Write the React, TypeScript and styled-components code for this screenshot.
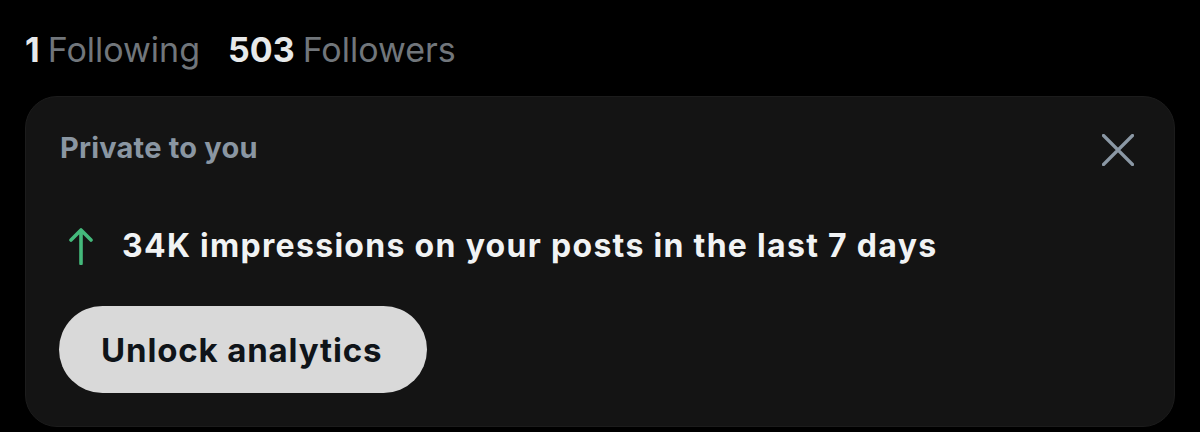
import React from "react";
import styled, { createGlobalStyle } from "styled-components";

const Global = createGlobalStyle`
  html, body { margin: 0; padding: 0; background: #000; }
  body { font-family: Inter, "Noto Sans", sans-serif; width: 1200px; height: 432px; overflow: hidden; }
`;

const Page = styled.div`
  display: flex;
  flex-direction: column;
  padding: 30px 25px 0 25px;
  gap: 26px;
`;

const Stats = styled.div`
  display: flex;
  align-items: baseline;
  gap: 28px;
  height: 40px;
  font-size: 34px;
  line-height: 40px;
  color: #71767b;
`;

const Stat = styled.span`
  display: inline-flex;
  align-items: baseline;
  gap: 8px;
`;

const Num = styled.b`
  color: #e7e9ea;
  font-weight: 700;
`;

const Card = styled.div`
  background: #141414;
  border: 1px solid #1c1c1c;
  border-radius: 32px;
  height: 331px;
  box-sizing: border-box;
  padding: 31px 40px 0 34px;
  display: flex;
  flex-direction: column;
`;

const Header = styled.div`
  display: flex;
  justify-content: space-between;
  align-items: center;
  height: 40px;
`;

const Label = styled.div`
  font-size: 29px;
  font-weight: 700;
  letter-spacing: 0.2px;
  color: #8a96a2;
  line-height: 40px;
`;

const Close = styled.button`
  background: none;
  border: 0;
  padding: 0;
  margin-top: 3px;
  width: 32px;
  height: 32px;
  display: flex;
  align-items: center;
  justify-content: center;
`;

const Info = styled.div`
  display: flex;
  align-items: center;
  gap: 29px;
  margin-top: 58px;
  padding-left: 9px;
  height: 40px;
  font-size: 32px;
  font-weight: 700;
  letter-spacing: 1.3px;
  color: #f1f3f4;
  line-height: 40px;
`;

const Button = styled.button`
  margin-top: 40px;
  margin-left: -1px;
  align-self: flex-start;
  height: 87px;
  padding: 0 45px 0 42px;
  border: 0;
  border-radius: 44px;
  background: #d9d9d9;
  color: #0f1419;
  font-family: Inter, "Noto Sans", sans-serif;
  font-size: 33px;
  font-weight: 700;
  letter-spacing: 0.85px;
`;

export default function App() {
  return (
    <>
      <Global />
      <Page>
        <Stats>
          <Stat>
            <Num>1</Num>Following
          </Stat>
          <Stat>
            <Num>503</Num>Followers
          </Stat>
        </Stats>
        <Card>
          <Header>
            <Label>Private to you</Label>
            <Close aria-label="Close">
              <svg width="32" height="32" viewBox="0 0 32 32">
                <path d="M1.5 1.5 L30.5 30.5 M30.5 1.5 L1.5 30.5" stroke="#8b98a5" strokeWidth="3.2" strokeLinecap="round" />
              </svg>
            </Close>
          </Header>
          <Info>
            <svg width="24" height="38" viewBox="0 0 24 38">
              <path d="M12 36.5 V3 M2 13 L12 3 L22 13" stroke="#44b97b" strokeWidth="3.6" fill="none" strokeLinecap="round" strokeLinejoin="round" />
            </svg>
            34K impressions on your posts in the last 7 days
          </Info>
          <Button>Unlock analytics</Button>
        </Card>
      </Page>
    </>
  );
}
